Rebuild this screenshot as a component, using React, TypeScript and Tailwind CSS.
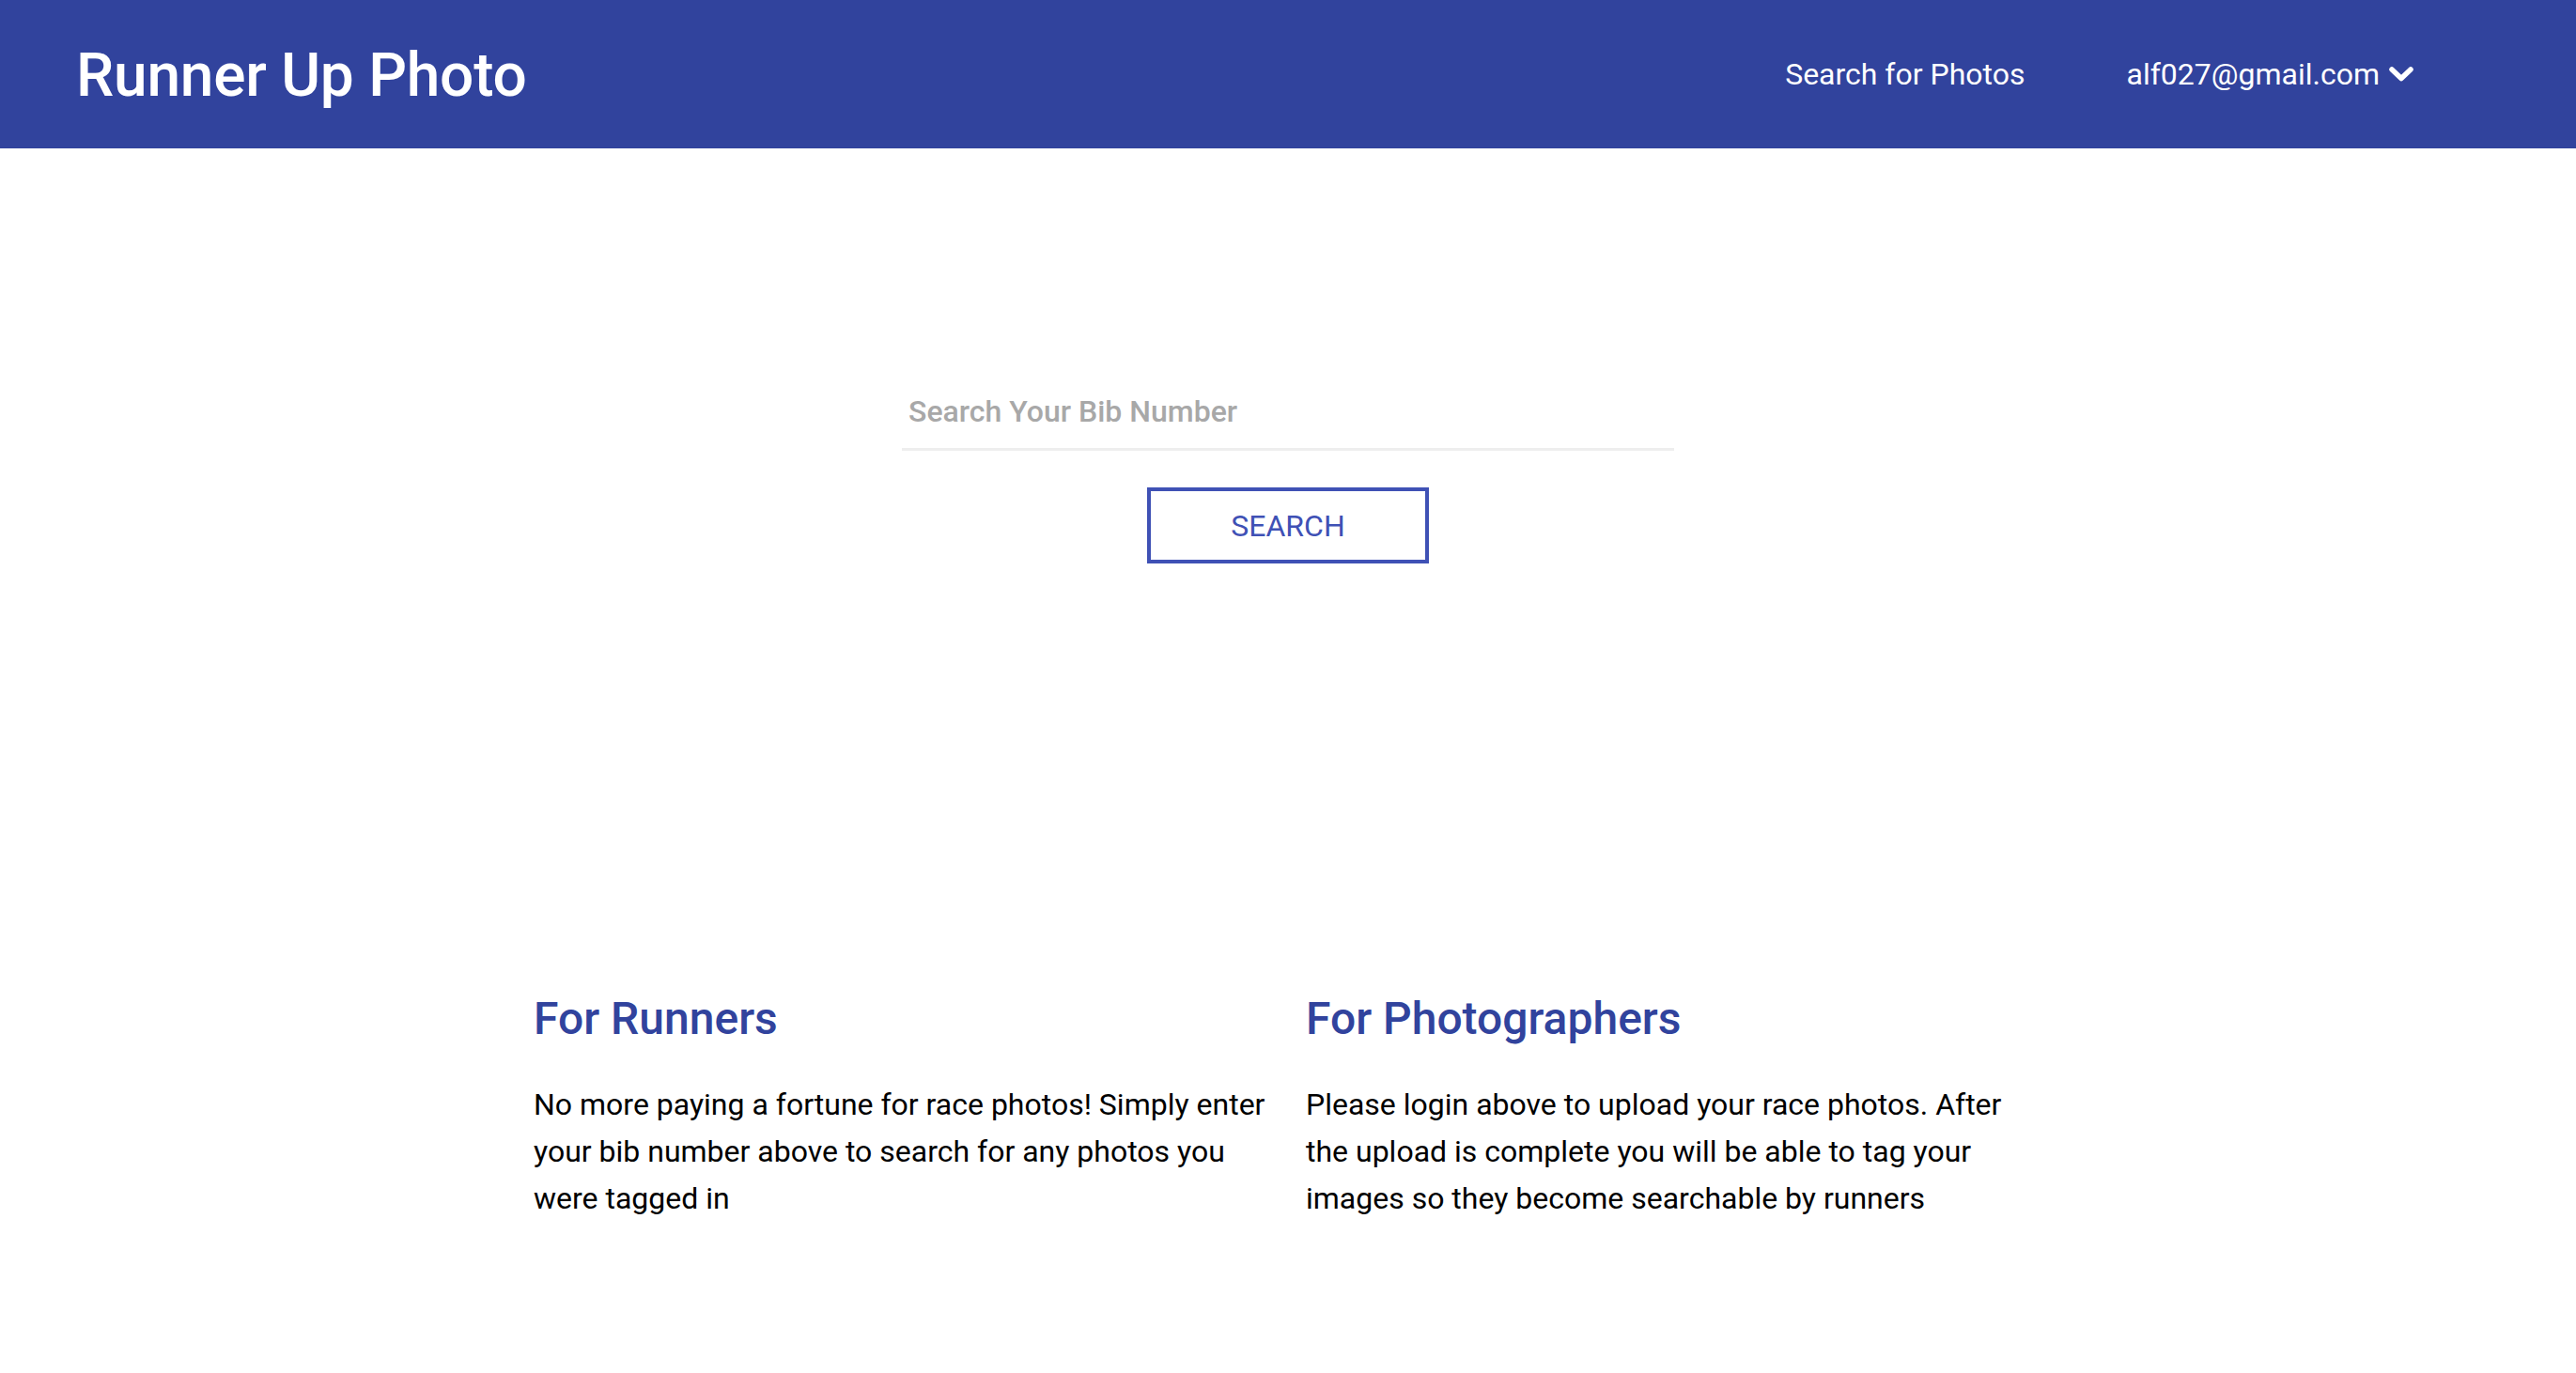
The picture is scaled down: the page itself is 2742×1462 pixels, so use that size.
import { useState } from 'react';

const blurbs = [
  {
    title: 'For Runners',
    body: 'No more paying a fortune for race photos! Simply enter your bib number above to search for any photos you were tagged in',
  },
  {
    title: 'For Photographers',
    body: 'Please login above to upload your race photos. After the upload is complete you will be able to tag your images so they become searchable by runners',
  },
];

export default function App() {
  const [bib, setBib] = useState('');

  return (
    <div className="min-h-screen bg-white font-['Roboto',sans-serif]">
      {/* Top bar */}
      <header className="h-[158px] bg-[#31439d] flex items-center justify-between pl-[81px] pr-[172px]">
        <a className="text-white text-[64px] font-medium leading-none tracking-[-0.25px] pt-[4px]">Runner Up Photo</a>
        <nav className="flex items-center text-white text-[32px]">
          <a className="mr-[108px]">Search for Photos</a>
          <button className="flex items-center gap-[9px]">
            <span>alf027@gmail.com</span>
            <svg width="28" height="18" viewBox="0 0 28 18" fill="none">
              <path d="M4 4 L14 13.5 L24 4" stroke="white" strokeWidth="5.5" strokeLinecap="round" strokeLinejoin="round" />
            </svg>
          </button>
        </nav>
      </header>

      {/* Search */}
      <section className="flex flex-col items-center pt-[240px]">
        <input
          value={bib}
          onChange={(e) => setBib(e.target.value)}
          placeholder="Search Your Bib Number"
          className="w-[822px] h-[82px] pl-[7px] border-b-[3px] border-[#eeeeee] text-[32px] font-medium outline-none placeholder:text-[#a8a8a8]"
        />
        <button className="mt-[39px] w-[300px] h-[81px] border-[4px] border-[#3f51b5] text-[#3f51b5] text-[32px]">
          SEARCH
        </button>
      </section>

      {/* Info columns */}
      <section className="w-[1606px] mx-auto mt-[449px] grid grid-cols-2 gap-[38px]">
        {blurbs.map((b) => (
          <div key={b.title}>
            <h2 className="text-[#31439d] text-[48px] font-medium">{b.title}</h2>
            <p className="mt-[30px] text-black text-[32px] leading-[50px]">{b.body}</p>
          </div>
        ))}
      </section>
    </div>
  );
}
